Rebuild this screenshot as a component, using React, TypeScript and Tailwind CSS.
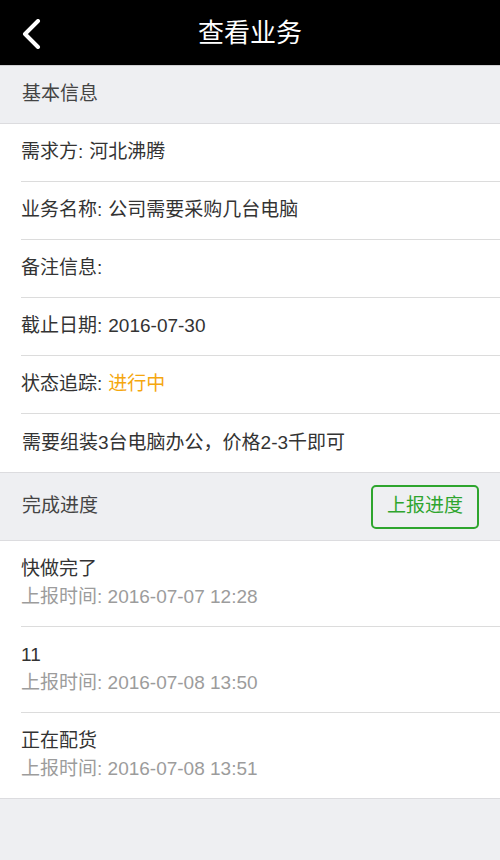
const font = "font-['Helvetica_Neue','Liberation_Sans','Noto_Sans_CJK_SC',sans-serif]";

const infoRows: { label: string; value?: string; accent?: boolean }[] = [
  { label: "需求方:", value: "河北沸腾" },
  { label: "业务名称:", value: "公司需要采购几台电脑" },
  { label: "备注信息:" },
  { label: "截止日期:", value: "2016-07-30" },
  { label: "状态追踪:", value: "进行中", accent: true },
];

const progress = [
  { title: "快做完了", time: "2016-07-07 12:28" },
  { title: "11", time: "2016-07-08 13:50" },
  { title: "正在配货", time: "2016-07-08 13:51" },
];

export default function App() {
  return (
    <div className={`min-h-[860px] w-[500px] bg-[#eeeff2] ${font}`}>
      {/* top bar */}
      <header className="relative flex h-[66px] items-center justify-center border-b border-[#cfcfd2] bg-black">
        <button className="absolute left-[20px] top-[19px] text-white">
          <svg width="22" height="30" viewBox="0 0 22 30" fill="none">
            <path d="M18 2 L5 15 L18 28" stroke="white" strokeWidth="4" strokeLinecap="round" strokeLinejoin="round" />
          </svg>
        </button>
        <h1 className="text-[26px] leading-none text-white">查看业务</h1>
      </header>

      <div className="flex h-[58px] items-center border-b border-[#dcdcdf] px-[22px] text-[19px] text-[#444]">
        基本信息
      </div>

      <div className="bg-white">
        {infoRows.map((row) => (
          <div key={row.label} className="pl-[21px]">
            <div className="flex h-[58px] items-center border-b border-[#dcdcdc] text-[19px] text-[#333]">
              <span>{row.label}</span>
              {row.value && (
                <span className={row.accent ? "ml-[6px] text-[#f5a70f]" : "ml-[6px]"}>{row.value}</span>
              )}
            </div>
          </div>
        ))}
        <div className="flex h-[59px] items-center border-b border-[#dcdcdf] px-[22px] text-[19px] text-[#333]">
          需要组装3台电脑办公，价格2-3千即可
        </div>
      </div>

      <div className="flex h-[68px] items-center justify-between border-b border-[#dcdcdf] pl-[22px] pr-[21px]">
        <span className="text-[19px] text-[#444]">完成进度</span>
        <button className="flex h-[44px] w-[108px] items-center justify-center rounded-[5px] border-2 border-[#2ea52e] text-[19px] text-[#2ea52e]">
          上报进度
        </button>
      </div>

      <div className="border-b border-[#dcdcdf] bg-white">
        {progress.map((p, i) => (
          <div key={p.time} className="pl-[21px]">
            <div
              className={`flex h-[85px] flex-col justify-center gap-[5px] pb-[3px] ${
                i < progress.length - 1 ? "h-[86px] border-b border-[#dcdcdc]" : ""
              }`}
            >
              <div className="text-[19px] leading-[23px] text-[#333]">{p.title}</div>
              <div className="text-[19px] leading-[23px] text-[#9c9c9c]">上报时间: {p.time}</div>
            </div>
          </div>
        ))}
      </div>
    </div>
  );
}
